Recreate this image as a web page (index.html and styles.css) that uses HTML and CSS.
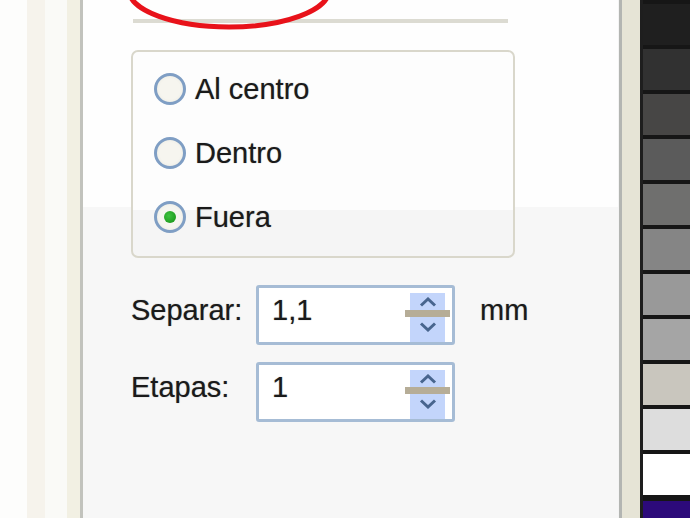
FILE: index.html
```html
<!DOCTYPE html>
<html lang="es">
<head>
    <meta charset="UTF-8">
    <meta name="viewport" content="width=device-width, initial-scale=1.0">
    <title>Contorno</title>
    <link rel="stylesheet" href="styles.css">
</head>
<body>
    <div class="screen">
        <div class="dock-edge"></div>

        <div class="panel">
            <!-- red annotation drawn over the dialog -->
            <svg class="mark" width="535" height="40" viewBox="0 0 535 40">
                <ellipse cx="146" cy="-10" rx="100" ry="37" fill="none" stroke="#e8121a" stroke-width="5"/>
            </svg>

            <div class="separator"></div>

            <div class="group">
                <div class="radio">
                    <span class="radio-circle"></span>
                    <span>Al centro</span>
                </div>
                <div class="radio">
                    <span class="radio-circle"></span>
                    <span>Dentro</span>
                </div>
                <div class="radio">
                    <span class="radio-circle checked"></span>
                    <span>Fuera</span>
                </div>
            </div>

            <div class="fields">
                <div class="field-row">
                    <span class="field-label">Separar:</span>
                    <div class="spin-field">
                        <span class="value">1,1</span>
                        <div class="spin">
                            <div class="spin-btn up">
                                <svg width="18" height="10" viewBox="0 0 18 10"><polyline points="2,8.5 9,2 16,8.5" fill="none" stroke="#48658e" stroke-width="3"/></svg>
                            </div>
                            <div class="spin-bar"></div>
                            <div class="spin-btn down">
                                <svg width="18" height="10" viewBox="0 0 18 10"><polyline points="2,1.5 9,8 16,1.5" fill="none" stroke="#48658e" stroke-width="3"/></svg>
                            </div>
                        </div>
                    </div>
                    <span class="unit">mm</span>
                </div>
                <div class="field-row">
                    <span class="field-label">Etapas:</span>
                    <div class="spin-field">
                        <span class="value">1</span>
                        <div class="spin">
                            <div class="spin-btn up">
                                <svg width="18" height="10" viewBox="0 0 18 10"><polyline points="2,8.5 9,2 16,8.5" fill="none" stroke="#48658e" stroke-width="3"/></svg>
                            </div>
                            <div class="spin-bar"></div>
                            <div class="spin-btn down">
                                <svg width="18" height="10" viewBox="0 0 18 10"><polyline points="2,1.5 9,8 16,1.5" fill="none" stroke="#48658e" stroke-width="3"/></svg>
                            </div>
                        </div>
                    </div>
                </div>
            </div>
        </div>

        <div class="panel-edge"></div>

        <div class="palette">
            <div class="swatch" style="background:#1f1f1f"></div>
            <div class="swatch" style="background:#313131"></div>
            <div class="swatch" style="background:#474645"></div>
            <div class="swatch" style="background:#5b5b5b"></div>
            <div class="swatch" style="background:#6f6f6e"></div>
            <div class="swatch" style="background:#858585"></div>
            <div class="swatch" style="background:#999999"></div>
            <div class="swatch" style="background:#a5a5a5"></div>
            <div class="swatch" style="background:#c9c6be"></div>
            <div class="swatch" style="background:#dddddd"></div>
            <div class="swatch" style="background:#ffffff"></div>
            <div class="swatch last" style="background:#2c0a7a"></div>
        </div>
    </div>
</body>
</html>
```

FILE: styles.css
```css
body {
    margin: 0;
    font-family: 'Liberation Sans', Arial, sans-serif;
    color: #1a1a1a;
    background-color: #f7f7f7;
}

.screen {
    display: flex;
    width: 690px;
    height: 518px;
    overflow: hidden;
}

.dock-edge {
    width: 83px;
    flex-shrink: 0;
    background: linear-gradient(to right,
        #fdfdfc 0 27px,
        #f6f3ec 27px 45px,
        #fafaf7 45px 67px,
        #f2f0e3 67px 80px,
        #c2c3bd 80px 83px);
}

.panel {
    position: relative;
    flex: 1;
    padding-left: 48px;
    background: linear-gradient(#fefefe 0 207px, #f7f7f7 207px);
}

.mark {
    position: absolute;
    left: 0;
    top: 0;
}

.separator {
    width: 375px;
    height: 4px;
    margin: 19px 0 0 2px;
    background-color: #dcdbd2;
}

.group {
    box-sizing: border-box;
    width: 384px;
    height: 208px;
    margin-top: 27px;
    padding: 21px 0 0 21px;
    border: 2px solid #d9d7cb;
    border-radius: 7px;
    background: linear-gradient(#fdfdfd 0 158px, #f5f5f5 158px);
    display: flex;
    flex-direction: column;
    gap: 32px;
}

.radio {
    display: flex;
    align-items: center;
    gap: 9px;
    height: 32px;
    font-size: 29px;
    line-height: 32px;
    text-shadow: 0 0 1px rgba(0, 0, 0, 0.45);
}

.radio-circle {
    box-sizing: border-box;
    width: 32px;
    height: 32px;
    border: 3px solid #7f9ec4;
    border-radius: 50%;
    background: radial-gradient(circle, #f6f5ef 0 55%, #e8e7de 100%);
    display: flex;
    align-items: center;
    justify-content: center;
}

.radio-circle.checked::after {
    content: '';
    width: 12px;
    height: 12px;
    border-radius: 50%;
    background: radial-gradient(circle at 40% 40%, #3fc23f, #149014);
}

.fields {
    margin-top: 27px;
    display: flex;
    flex-direction: column;
    gap: 17px;
}

.field-row {
    display: flex;
    align-items: flex-start;
    font-size: 29px;
    line-height: 32px;
    text-shadow: 0 0 1px rgba(0, 0, 0, 0.45);
}

.field-label {
    width: 125px;
    margin-top: 9px;
}

.spin-field {
    box-sizing: border-box;
    width: 199px;
    height: 60px;
    border: 3px solid #a6bcd5;
    border-radius: 3px;
    background-color: #ffffff;
    display: flex;
    justify-content: space-between;
}

.value {
    padding: 6px 0 0 13px;
}

.spin {
    width: 45px;
    margin: 5px 2px 0 0;
    display: flex;
    flex-direction: column;
    align-items: center;
}

.spin-btn {
    width: 35px;
    background-color: #c3d5fb;
    display: flex;
    justify-content: center;
}

.spin-btn.up {
    height: 17px;
    align-items: center;
}

.spin-btn.down {
    height: 25px;
    padding-top: 5px;
    box-sizing: border-box;
}

.spin-bar {
    width: 45px;
    height: 7px;
    background-color: #b6ad97;
}

.unit {
    margin: 9px 0 0 25px;
}

.panel-edge {
    width: 25px;
    flex-shrink: 0;
    background: linear-gradient(to right,
        #f4f4f4 0 1px,
        #b3b5b2 1px 4px,
        #e6e4d6 4px 22px,
        #1e1e1e 22px 25px);
}

.palette {
    width: 47px;
    flex-shrink: 0;
    display: flex;
    flex-direction: column;
}

.swatch {
    height: 41px;
    flex-shrink: 0;
    border-top: 4px solid #161616;
}

.swatch.last {
    flex: 1;
    border-top-width: 6px;
}
```
